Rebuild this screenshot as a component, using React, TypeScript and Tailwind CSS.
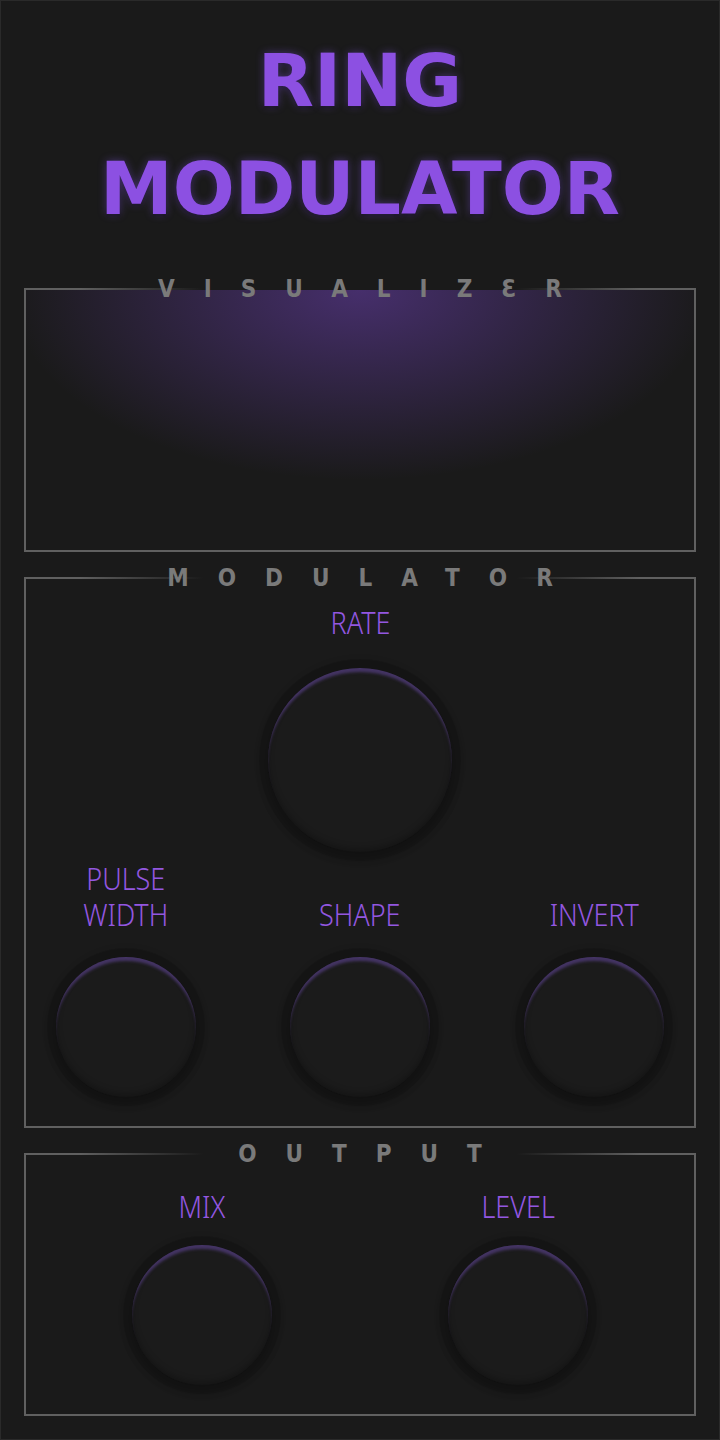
import React from 'react';

const Legend: React.FC<{ title: string }> = ({ title }) => (
  <>
    {/* fade the border line under the legend */}
    <div className="absolute -top-[2px] left-1/2 -translate-x-1/2 h-[2px] w-[560px] bg-[linear-gradient(90deg,transparent,#1a1a1a_22%,#1a1a1a_78%,transparent)]" />
    <div className="absolute -top-[15px] left-0 right-0 flex justify-center pointer-events-none">
      <span className="pl-[29px] tracking-[29px] text-[24px] leading-[28px] font-bold text-[#7a7a7a] font-['DejaVu_Sans_Condensed','DejaVu_Sans',sans-serif]">
        {title}
      </span>
    </div>
  </>
);

const Knob: React.FC<{ size: 'lg' | 'sm' }> = ({ size }) => (
  <div
    className={`${size === 'lg' ? 'w-[184px] h-[184px]' : 'w-[140px] h-[140px]'} rounded-full bg-[#1b1b1b] shadow-[0_0_0_9px_rgba(0,0,0,0.09),0_0_4px_11px_rgba(0,0,0,0.05),0_4px_10px_3px_rgba(0,0,0,0.18),inset_0_5px_3px_-1px_rgba(120,85,190,0.45),inset_0_-3px_6px_rgba(0,0,0,0.25)] shrink-0`}
  />
);

const Label: React.FC<{ children: React.ReactNode }> = ({ children }) => (
  <div className="inline-block origin-center scale-x-[0.87] text-center text-[31px] leading-[36px] font-light text-[#9357e0] font-['Noto_Sans',sans-serif]">
    {children}
  </div>
);

export default function App() {
  return (
    <div className="h-[1440px] w-[720px] border border-[#2a2a2a] bg-[#1a1a1a] px-[23px] pt-[26px] flex flex-col">
      {/* Title */}
      <h1 className="text-center text-[73px] leading-[108px] font-bold text-[#8c50e2] font-['DejaVu_Sans',sans-serif] [text-shadow:0_0_9px_rgba(139,92,246,0.4),0_2px_3px_rgba(0,0,0,0.5)]">
        RING
        <br />
        MODULATOR
      </h1>

      {/* Visualizer */}
      <section className="relative mt-[45px] h-[264px] border-2 border-[#606060] bg-[radial-gradient(ellipse_350px_190px_at_50%_0%,rgba(120,70,200,0.47),transparent)]">
        <Legend title={'VISUALIZ' + '\u0190' + 'R'} />
      </section>

      {/* Modulator */}
      <section className="relative mt-[25px] h-[551px] border-2 border-[#606060] pt-[25px] flex flex-col items-center">
        <Legend title="MODULATOR" />
        <Label>RATE</Label>
        <div className="mt-[28px]">
          <Knob size="lg" />
        </div>
        <div className="mt-[8px] w-full px-[30px] flex justify-between">
          {[['PULSE', 'WIDTH'], ['SHAPE'], ['INVERT']].map((lines, i) => (
            <div key={i} className="w-[140px] flex flex-col items-center">
              <div className="h-[72px] flex flex-col justify-end items-center">
                <Label>
                  {lines.map((l, j) => (
                    <div key={j}>{l}</div>
                  ))}
                </Label>
              </div>
              <div className="mt-[25px]">
                <Knob size="sm" />
              </div>
            </div>
          ))}
        </div>
      </section>

      {/* Output */}
      <section className="relative mt-[25px] h-[263px] border-2 border-[#606060] pt-[33px] flex justify-center gap-[176px]">
        <Legend title="OUTPUT" />
        {['MIX', 'LEVEL'].map((name) => (
          <div key={name} className="w-[140px] flex flex-col items-center">
            <Label>{name}</Label>
            <div className="mt-[21px]">
              <Knob size="sm" />
            </div>
          </div>
        ))}
      </section>
    </div>
  );
}
